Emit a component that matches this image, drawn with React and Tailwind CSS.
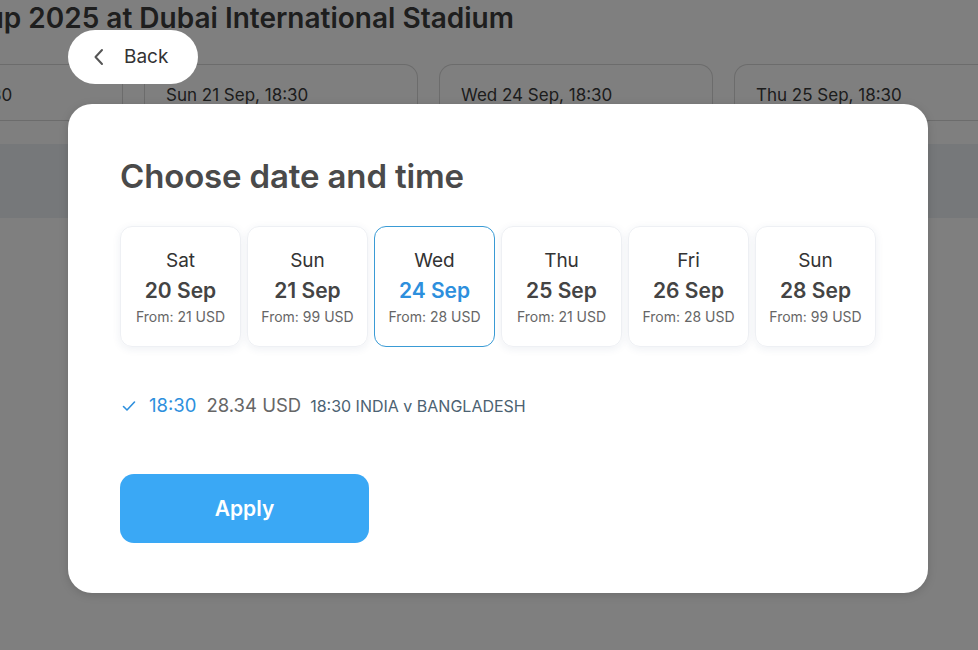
import React from "react";

const font = { fontFamily: '"Inter", "Noto Sans", sans-serif' };

const tabs = ["Sat 20 Sep, 18:30", "Sun 21 Sep, 18:30", "Wed 24 Sep, 18:30", "Thu 25 Sep, 18:30"];

const days = [
  { d: "Sat", date: "20 Sep", from: "21" },
  { d: "Sun", date: "21 Sep", from: "99" },
  { d: "Wed", date: "24 Sep", from: "28", sel: true },
  { d: "Thu", date: "25 Sep", from: "21" },
  { d: "Fri", date: "26 Sep", from: "28" },
  { d: "Sun", date: "28 Sep", from: "99" },
];

export default function App() {
  return (
    <div className="relative w-[978px] h-[650px] overflow-hidden bg-white" style={font}>
      {/* underlying page */}
      <div className="flex flex-col">
        <h1 className="h-[38px] mt-[-1px] ml-[-100px] whitespace-nowrap text-[28px] font-semibold leading-[38px] text-[#3d3d3d]">
          Asia Cup 2025 at Dubai International Stadium
        </h1>
        <div className="mt-[27px] flex gap-[21px] ml-[-151px] border-b border-[#d8d8d8] w-[1200px]">
          {tabs.map((t) => (
            <div
              key={t}
              className="w-[274px] h-[56px] shrink-0 rounded-t-[14px] border border-b-0 border-[#d8d8d8] flex items-center pl-[21px] pt-[6px] text-[17px] text-[#3a3a3a]"
            >
              {t}
            </div>
          ))}
        </div>
        <div className="mt-[23px] h-[74px] bg-[#edf0f5]" />
      </div>

      {/* overlay */}
      <div className="absolute inset-0 bg-black/50" />

      {/* back button */}
      <button className="absolute left-[68px] top-[30px] w-[130px] h-[54px] rounded-full bg-white flex items-center pl-[24px] gap-[18px] text-[19px] text-[#333]">
        <svg width="14" height="20" viewBox="0 0 14 20" fill="none">
          <path d="M10 3 L3.5 10 L10 17" stroke="#555" strokeWidth="2" strokeLinecap="round" strokeLinejoin="round" />
        </svg>
        <span>Back</span>
      </button>

      {/* modal */}
      <div className="absolute left-[68px] top-[104px] w-[860px] h-[489px] rounded-[24px] bg-white shadow-[0_2px_10px_rgba(0,0,0,0.15)] px-[52px] pt-[52px]">
        <h2 className="text-[33px] font-semibold leading-[40px] text-[#4a4a4a] tracking-[-0.15px]">Choose date and time</h2>
        <div className="mt-[30px] flex gap-[6px]">
          {days.map((x, i) => (
            <div
              key={i}
              className={
                "w-[121px] h-[121px] rounded-[12px] flex flex-col items-center pt-[22px] " +
                (x.sel
                  ? "border border-[#3a9bd5]"
                  : "border border-[#eef0f4] shadow-[0_2px_8px_rgba(40,70,120,0.08)]")
              }
            >
              <div className="text-[19px] leading-[24px] text-[#333]">{x.d}</div>
              <div className={"text-[21px] font-semibold leading-[28px] mt-[4px] " + (x.sel ? "text-[#2d8fdd]" : "text-[#444]")}>
                {x.date}
              </div>
              <div className="text-[14px] leading-[20px] text-[#666] mt-[2px]">From: {x.from} USD</div>
            </div>
          ))}
        </div>
        <div className="mt-[45px] flex items-center h-[28px] pl-[2px]">
          <svg width="14" height="12" viewBox="0 0 14 12" fill="none">
            <path d="M1.5 6.5 L5 10 L12.5 2" stroke="#2d8fdd" strokeWidth="1.6" strokeLinecap="round" strokeLinejoin="round" />
          </svg>
          <span className="ml-[13px] text-[18.5px] text-[#2d8fdd]">18:30</span>
          <span className="ml-[10px] text-[18.5px] text-[#666]">28.34 USD</span>
          <span className="ml-[9px] text-[16px] text-[#4c6272]">18:30 INDIA v BANGLADESH</span>
        </div>
        <button className="mt-[54px] w-[249px] h-[69px] rounded-[14px] bg-[#3aa8f5] text-white text-[21px] font-semibold flex items-center justify-center">
          Apply
        </button>
      </div>
    </div>
  );
}
